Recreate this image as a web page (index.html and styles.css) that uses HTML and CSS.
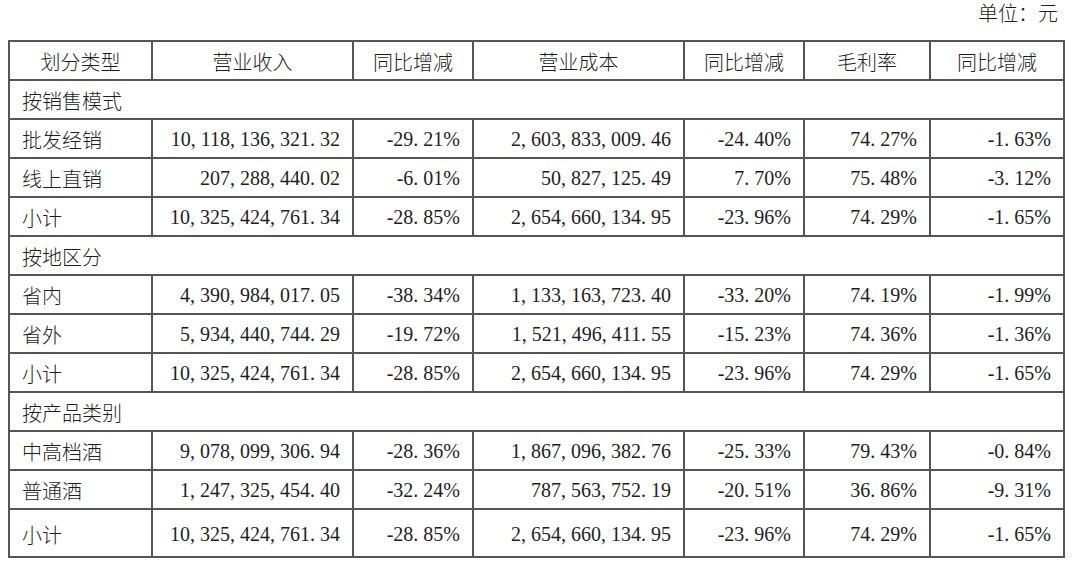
FILE: index.html
```html
<!DOCTYPE html>
<html lang="zh-CN">
<head>
<meta charset="utf-8">
<title>营业收入构成</title>
<link rel="stylesheet" href="styles.css">
</head>
<body>
<div class="page">
  <div class="unit">单位：元</div>
  <table class="sheet">
    <colgroup>
      <col class="c1"><col class="c2"><col class="c3"><col class="c4"><col class="c5"><col class="c6"><col class="c7">
    </colgroup>
    <thead>
      <tr><th>划分类型</th><th>营业收入</th><th>同比增减</th><th>营业成本</th><th>同比增减</th><th>毛利率</th><th>同比增减</th></tr>
    </thead>
    <tbody>
      <tr class="sec"><td colspan="7">按销售模式</td></tr>
      <tr><td>批发经销</td><td class="n">10<span class="s">,</span>118<span class="s">,</span>136<span class="s">,</span>321<span class="s">.</span>32</td><td class="n">-29<span class="s">.</span>21%</td><td class="n">2<span class="s">,</span>603<span class="s">,</span>833<span class="s">,</span>009<span class="s">.</span>46</td><td class="n">-24<span class="s">.</span>40%</td><td class="n">74<span class="s">.</span>27%</td><td class="n">-1<span class="s">.</span>63%</td></tr>
      <tr><td>线上直销</td><td class="n">207<span class="s">,</span>288<span class="s">,</span>440<span class="s">.</span>02</td><td class="n">-6<span class="s">.</span>01%</td><td class="n">50<span class="s">,</span>827<span class="s">,</span>125<span class="s">.</span>49</td><td class="n">7<span class="s">.</span>70%</td><td class="n">75<span class="s">.</span>48%</td><td class="n">-3<span class="s">.</span>12%</td></tr>
      <tr><td>小计</td><td class="n">10<span class="s">,</span>325<span class="s">,</span>424<span class="s">,</span>761<span class="s">.</span>34</td><td class="n">-28<span class="s">.</span>85%</td><td class="n">2<span class="s">,</span>654<span class="s">,</span>660<span class="s">,</span>134<span class="s">.</span>95</td><td class="n">-23<span class="s">.</span>96%</td><td class="n">74<span class="s">.</span>29%</td><td class="n">-1<span class="s">.</span>65%</td></tr>
      <tr class="sec"><td colspan="7">按地区分</td></tr>
      <tr><td>省内</td><td class="n">4<span class="s">,</span>390<span class="s">,</span>984<span class="s">,</span>017<span class="s">.</span>05</td><td class="n">-38<span class="s">.</span>34%</td><td class="n">1<span class="s">,</span>133<span class="s">,</span>163<span class="s">,</span>723<span class="s">.</span>40</td><td class="n">-33<span class="s">.</span>20%</td><td class="n">74<span class="s">.</span>19%</td><td class="n">-1<span class="s">.</span>99%</td></tr>
      <tr><td>省外</td><td class="n">5<span class="s">,</span>934<span class="s">,</span>440<span class="s">,</span>744<span class="s">.</span>29</td><td class="n">-19<span class="s">.</span>72%</td><td class="n">1<span class="s">,</span>521<span class="s">,</span>496<span class="s">,</span>411<span class="s">.</span>55</td><td class="n">-15<span class="s">.</span>23%</td><td class="n">74<span class="s">.</span>36%</td><td class="n">-1<span class="s">.</span>36%</td></tr>
      <tr><td>小计</td><td class="n">10<span class="s">,</span>325<span class="s">,</span>424<span class="s">,</span>761<span class="s">.</span>34</td><td class="n">-28<span class="s">.</span>85%</td><td class="n">2<span class="s">,</span>654<span class="s">,</span>660<span class="s">,</span>134<span class="s">.</span>95</td><td class="n">-23<span class="s">.</span>96%</td><td class="n">74<span class="s">.</span>29%</td><td class="n">-1<span class="s">.</span>65%</td></tr>
      <tr class="sec"><td colspan="7">按产品类别</td></tr>
      <tr><td>中高档酒</td><td class="n">9<span class="s">,</span>078<span class="s">,</span>099<span class="s">,</span>306<span class="s">.</span>94</td><td class="n">-28<span class="s">.</span>36%</td><td class="n">1<span class="s">,</span>867<span class="s">,</span>096<span class="s">,</span>382<span class="s">.</span>76</td><td class="n">-25<span class="s">.</span>33%</td><td class="n">79<span class="s">.</span>43%</td><td class="n">-0<span class="s">.</span>84%</td></tr>
      <tr><td>普通酒</td><td class="n">1<span class="s">,</span>247<span class="s">,</span>325<span class="s">,</span>454<span class="s">.</span>40</td><td class="n">-32<span class="s">.</span>24%</td><td class="n">787<span class="s">,</span>563<span class="s">,</span>752<span class="s">.</span>19</td><td class="n">-20<span class="s">.</span>51%</td><td class="n">36<span class="s">.</span>86%</td><td class="n">-9<span class="s">.</span>31%</td></tr>
      <tr class="last"><td>小计</td><td class="n">10<span class="s">,</span>325<span class="s">,</span>424<span class="s">,</span>761<span class="s">.</span>34</td><td class="n">-28<span class="s">.</span>85%</td><td class="n">2<span class="s">,</span>654<span class="s">,</span>660<span class="s">,</span>134<span class="s">.</span>95</td><td class="n">-23<span class="s">.</span>96%</td><td class="n">74<span class="s">.</span>29%</td><td class="n">-1<span class="s">.</span>65%</td></tr>
    </tbody>
  </table>
</div>
</body>
</html>
```

FILE: styles.css
```css
* { box-sizing: border-box; }
html, body { margin: 0; background: #ffffff; }
body {
  font-family: "Liberation Serif", "Noto Sans CJK SC", serif;
  font-size: 20px;
  color: #1e1e1e;
}
.page { width: 1080px; padding-left: 8px; }
.unit {
  height: 40px;
  line-height: 26px;
  text-align: right;
  padding-right: 22px;
  font-family: "Noto Sans CJK SC", sans-serif;
  font-weight: 300;
}
.sheet {
  border-collapse: collapse;
  table-layout: fixed;
  width: 1057px;
}
.c1 { width: 143px; }
.c2 { width: 201px; }
.c3 { width: 120px; }
.c4 { width: 211px; }
.c5 { width: 120px; }
.c6 { width: 126px; }
.c7 { width: 134px; }
.sheet th, .sheet td {
  border: 2px solid #555555;
  padding: 2px 12px 0 12px;
  font-weight: normal;
  white-space: nowrap;
  vertical-align: middle;
}
.sheet th {
  text-align: center;
  font-family: "Noto Sans CJK SC", sans-serif;
  font-weight: 300;
}
.sheet td { text-align: left; font-weight: 300; }
.sheet td.n { text-align: right; padding-right: 12px; }
.sheet tr { height: 39px; }
.sheet tr.last { height: 48px; }
.s { margin-right: 5px; }
```
